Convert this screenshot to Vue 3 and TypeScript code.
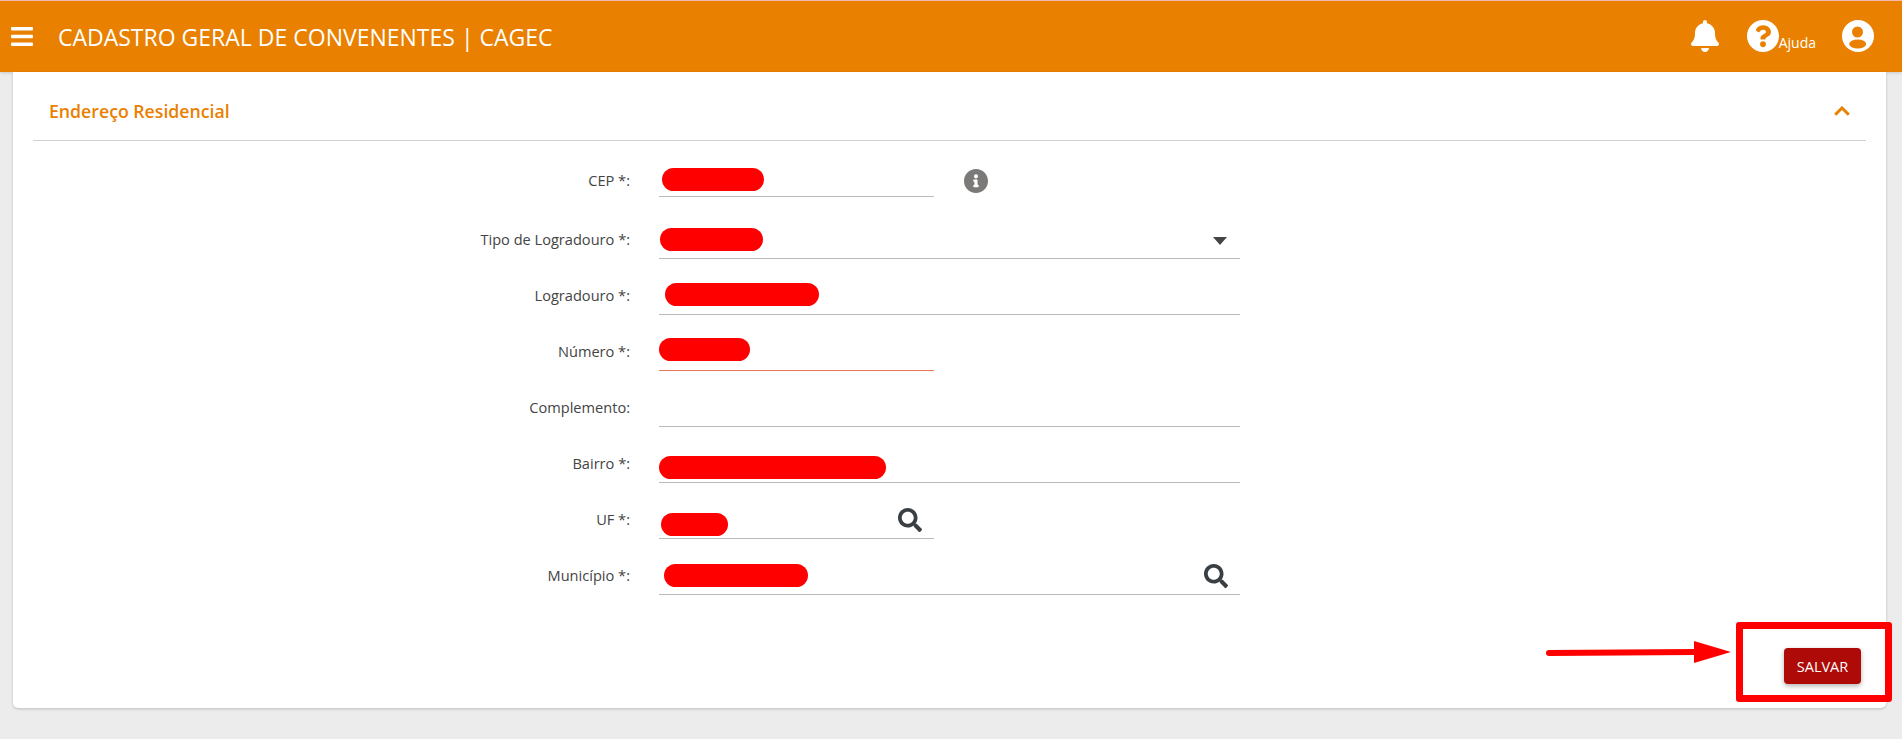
<script setup lang="ts">
interface Field {
  label: string
  wide: boolean
  blob?: { left: number; width: number; top: number }
  icon?: 'search' | 'caret'
  focused?: boolean
}

const fields: Field[] = [
  { label: 'CEP *:', wide: false, blob: { left: 3, width: 102, top: 2 } },
  { label: 'Tipo de Logradouro *:', wide: true, blob: { left: 1, width: 103, top: 25 }, icon: 'caret' },
  { label: 'Logradouro *:', wide: true, blob: { left: 6, width: 154, top: 24 } },
  { label: 'Número *:', wide: false, blob: { left: 0, width: 91, top: 23 }, focused: true },
  { label: 'Complemento:', wide: true },
  { label: 'Bairro *:', wide: true, blob: { left: 0, width: 227, top: 29 } },
  { label: 'UF *:', wide: false, blob: { left: 2, width: 67, top: 30 }, icon: 'search' },
  { label: 'Município *:', wide: true, blob: { left: 5, width: 144, top: 25 }, icon: 'search' },
]

const searchPath =
  'M505 442.7L405.3 343c-4.5-4.5-10.6-7-17-7H372c27.6-35.3 44-79.7 44-128C416 93.1 322.9 0 208 0S0 93.1 0 208s93.1 208 208 208c48.3 0 92.7-16.4 128-44v16.3c0 6.4 2.5 12.5 7 17l99.7 99.7c9.4 9.4 24.6 9.4 33.9 0l28.3-28.3c9.4-9.4 9.4-24.6.1-34zM208 336c-70.7 0-128-57.2-128-128 0-70.7 57.2-128 128-128 70.7 0 128 57.2 128 128 0 70.7-57.2 128-128 128z'
</script>

<template>
  <div class="page">
    <header class="topbar">
      <svg class="bars" viewBox="0 0 448 512" aria-hidden="true">
        <path d="M16 132h416c8.837 0 16-7.163 16-16V76c0-8.837-7.163-16-16-16H16C7.163 60 0 67.163 0 76v40c0 8.837 7.163 16 16 16zm0 160h416c8.837 0 16-7.163 16-16v-40c0-8.837-7.163-16-16-16H16c-8.837 0-16 7.163-16 16v40c0 8.837 7.163 16 16 16zm0 160h416c8.837 0 16-7.163 16-16v-40c0-8.837-7.163-16-16-16H16c-8.837 0-16 7.163-16 16v40c0 8.837 7.163 16 16 16z" />
      </svg>
      <h1 class="title">CADASTRO GERAL DE CONVENENTES | CAGEC</h1>
      <div class="actions">
        <svg class="bell" viewBox="0 0 448 512" preserveAspectRatio="none" aria-hidden="true">
          <path d="M224 512c35.32 0 63.97-28.65 63.97-64H160.03c0 35.35 28.65 64 63.97 64zm215.39-149.71c-19.32-20.76-55.47-51.99-55.47-154.29 0-77.7-54.48-139.9-127.94-155.16V32c0-17.67-14.32-32-31.98-32s-31.98 14.33-31.98 32v20.84C118.56 68.1 64.08 130.3 64.08 208c0 102.3-36.15 133.53-55.47 154.29-6 6.45-8.66 14.16-8.61 21.71.11 16.4 12.98 32 32.1 32h383.8c19.12 0 32-15.6 32.1-32 .05-7.55-2.61-15.27-8.61-21.71z" />
        </svg>
        <div class="help">
          <svg class="round" viewBox="8 8 496 496" aria-hidden="true">
            <path d="M504 256c0 136.997-111.043 248-248 248S8 392.997 8 256C8 119.083 119.043 8 256 8s248 111.083 248 248zM262.655 90c-54.497 0-89.255 22.957-116.549 63.758-3.536 5.286-2.353 12.415 2.715 16.258l34.699 26.31c5.205 3.947 12.621 3.008 16.665-2.122 17.864-22.658 30.113-35.797 57.303-35.797 20.429 0 45.698 13.148 45.698 32.958 0 14.976-12.363 22.667-32.534 33.976C247.128 238.528 216 254.941 216 296v4c0 6.627 5.373 12 12 12h56c6.627 0 12-5.373 12-12v-1.333c0-28.462 83.186-29.647 83.186-106.667 0-58.002-60.165-102-116.531-102zM256 338c-25.365 0-46 20.635-46 46 0 25.364 20.635 46 46 46s46-20.636 46-46c0-25.365-20.635-46-46-46z" />
          </svg>
          <span class="help-text">Ajuda</span>
        </div>
        <svg class="round user" viewBox="0 0 32 32" aria-hidden="true">
          <circle class="user-disc" cx="16" cy="16" r="16" />
          <circle class="user-cut" cx="15.5" cy="12" r="5.5" />
          <ellipse class="user-cut" cx="15.7" cy="24" rx="8.5" ry="4.5" />
        </svg>
      </div>
    </header>

    <main class="card">
      <div class="section-head">
        <h2 class="section-title">Endereço Residencial</h2>
        <svg class="chevron" viewBox="0 0 16 10" aria-hidden="true">
          <path d="M1.2 8.8L8 2l6.8 6.8" />
        </svg>
      </div>

      <form class="form" @submit.prevent>
        <div v-for="f in fields" :key="f.label" class="row">
          <label class="label">{{ f.label }}</label>
          <div class="control-wrap">
            <div class="control" :class="{ wide: f.wide, focused: f.focused }">
              <span
                v-if="f.blob"
                class="blob"
                :style="{ marginLeft: f.blob.left + 'px', width: f.blob.width + 'px', marginTop: f.blob.top + 'px' }"
              ></span>
              <svg v-if="f.icon === 'search'" class="search" viewBox="0 0 512 512" aria-hidden="true">
                <path :d="searchPath" />
              </svg>
              <span v-if="f.icon === 'caret'" class="caret"></span>
            </div>
            <svg v-if="f.label === 'CEP *:'" class="info" viewBox="8 8 496 496" aria-hidden="true">
              <path d="M256 8C119.043 8 8 119.083 8 256c0 136.997 111.043 248 248 248s248-111.003 248-248C504 119.083 392.957 8 256 8zm0 110c23.196 0 42 18.804 42 42s-18.804 42-42 42-42-18.804-42-42 18.804-42 42-42zm56 254c0 6.627-5.373 12-12 12h-88c-6.627 0-12-5.373-12-12v-24c0-6.627 5.373-12 12-12h12v-64h-12c-6.627 0-12-5.373-12-12v-24c0-6.627 5.373-12 12-12h64c6.627 0 12 5.373 12 12v100h12c6.627 0 12 5.373 12 12v24z" />
            </svg>
          </div>
        </div>
      </form>

      <div class="footer">
        <button type="button" class="save">SALVAR</button>
      </div>

      <svg class="arrow" viewBox="0 0 186 24" aria-hidden="true">
        <path class="arrow-line" d="M4 13L150 12" />
        <path class="arrow-head" d="M149 1L186 12L149 23Z" />
      </svg>
      <div class="highlight"></div>
    </main>
  </div>
</template>

<style>
html,
body {
  margin: 0;
  background: #ececec;
}
</style>

<style scoped>
.page {
  height: 739px;
  overflow: hidden;
  background: #ececec;
  font-family: "Open Sans", "Liberation Sans", sans-serif;
}

.topbar {
  height: 71px;
  border-top: 1px solid #f4b6b0;
  background: #e98000;
  display: flex;
  align-items: center;
  color: #fff;
  position: relative;
  box-shadow: 0 1px 3px rgba(0, 0, 0, 0.15);
}

.bars {
  width: 22px;
  height: 25px;
  margin-left: 11px;
  fill: #fff;
  flex: none;
}

.title {
  margin: 0 0 0 25px;
  font-size: 23px;
  font-weight: 400;
  white-space: nowrap;
}

.actions {
  margin-left: auto;
  display: flex;
  align-items: flex-start;
  padding: 0 28px 0 0;
  height: 32px;
  margin-top: -2px;
}

.bell {
  width: 28px;
  height: 32px;
  fill: #fff;
  margin-right: 28px;
}

.help {
  display: flex;
  align-items: flex-end;
  margin-right: 26px;
}

.round {
  width: 32px;
  height: 32px;
  fill: #fff;
  display: block;
}

.user-disc {
  fill: #fff;
}

.user-cut {
  fill: #e98000;
}

.help-text {
  font-size: 14px;
  line-height: 18px;
  margin-bottom: 0;
}

.card {
  position: relative;
  margin: 0 16px 0 13px;
  height: 636px;
  background: #fff;
  border-radius: 0 0 5px 5px;
  box-shadow: 0 1px 3px rgba(0, 0, 0, 0.2);
  box-sizing: border-box;
  padding: 0 20px;
}

.section-head {
  height: 58px;
  border-bottom: 1px solid #d0d0d0;
  display: flex;
  align-items: center;
  justify-content: space-between;
  padding: 10px 16px 0 16px;
  box-sizing: content-box;
}

.section-title {
  margin: 0;
  font-size: 17.7px;
  font-weight: 600;
  color: #e98000;
}

.chevron {
  width: 16px;
  height: 10px;
  fill: none;
  stroke: #e98000;
  stroke-width: 3;
}

.form {
  padding-top: 25px;
}

.row {
  display: grid;
  grid-template-columns: 597px 1fr;
  column-gap: 29px;
  height: 56px;
}

.row:first-child {
  height: 37px;
}

.row:first-child .control {
  height: 31px;
}

.row:first-child .label {
  padding-top: 4px;
}

.row:first-child .control-wrap {
  align-items: flex-start;
}

.label {
  font-size: 14.6px;
  line-height: 20px;
  color: #444;
  text-align: right;
  padding-top: 26px;
}

.control-wrap {
  display: flex;
  align-items: flex-end;
}

.control {
  position: relative;
  box-sizing: border-box;
  width: 275px;
  height: 56px;
  border-bottom: 1px solid #bbb;
}

.blob {
  display: block;
  height: 23px;
  border-radius: 12px;
  background: #ff0000;
}

.control.wide {
  width: 581px;
}

.control.focused {
  border-bottom-color: #e8795a;
}

.search {
  position: absolute;
  right: 12px;
  bottom: 6px;
  width: 24px;
  height: 24px;
  fill: #3a3f44;
}

.caret {
  position: absolute;
  right: 13px;
  bottom: 13px;
  border-left: 7.5px solid transparent;
  border-right: 7.5px solid transparent;
  border-top: 8px solid #444;
}

.info {
  width: 24px;
  height: 24px;
  margin-left: 30px;
  margin-top: 3px;
  fill: #7c7a78;
  flex: none;
}

.footer {
  position: absolute;
  right: 25px;
  top: 576px;
}

.save {
  width: 77px;
  height: 36px;
  border: none;
  border-radius: 4px;
  background: #ad0a08;
  color: #fff;
  font-family: inherit;
  font-size: 14.5px;
  box-shadow: 0 2px 5px rgba(0, 0, 0, 0.3);
  padding: 0;
}

.arrow {
  position: absolute;
  left: 1532px;
  top: 568px;
  width: 186px;
  height: 24px;
}

.arrow-line {
  stroke: #ff0000;
  stroke-width: 6;
  stroke-linecap: round;
  fill: none;
}

.arrow-head {
  fill: #ff0000;
}

.highlight {
  position: absolute;
  left: 1723px;
  top: 550px;
  width: 156px;
  height: 80px;
  box-sizing: border-box;
  border: 7px solid #ff0000;
  border-radius: 3px;
}
</style>
